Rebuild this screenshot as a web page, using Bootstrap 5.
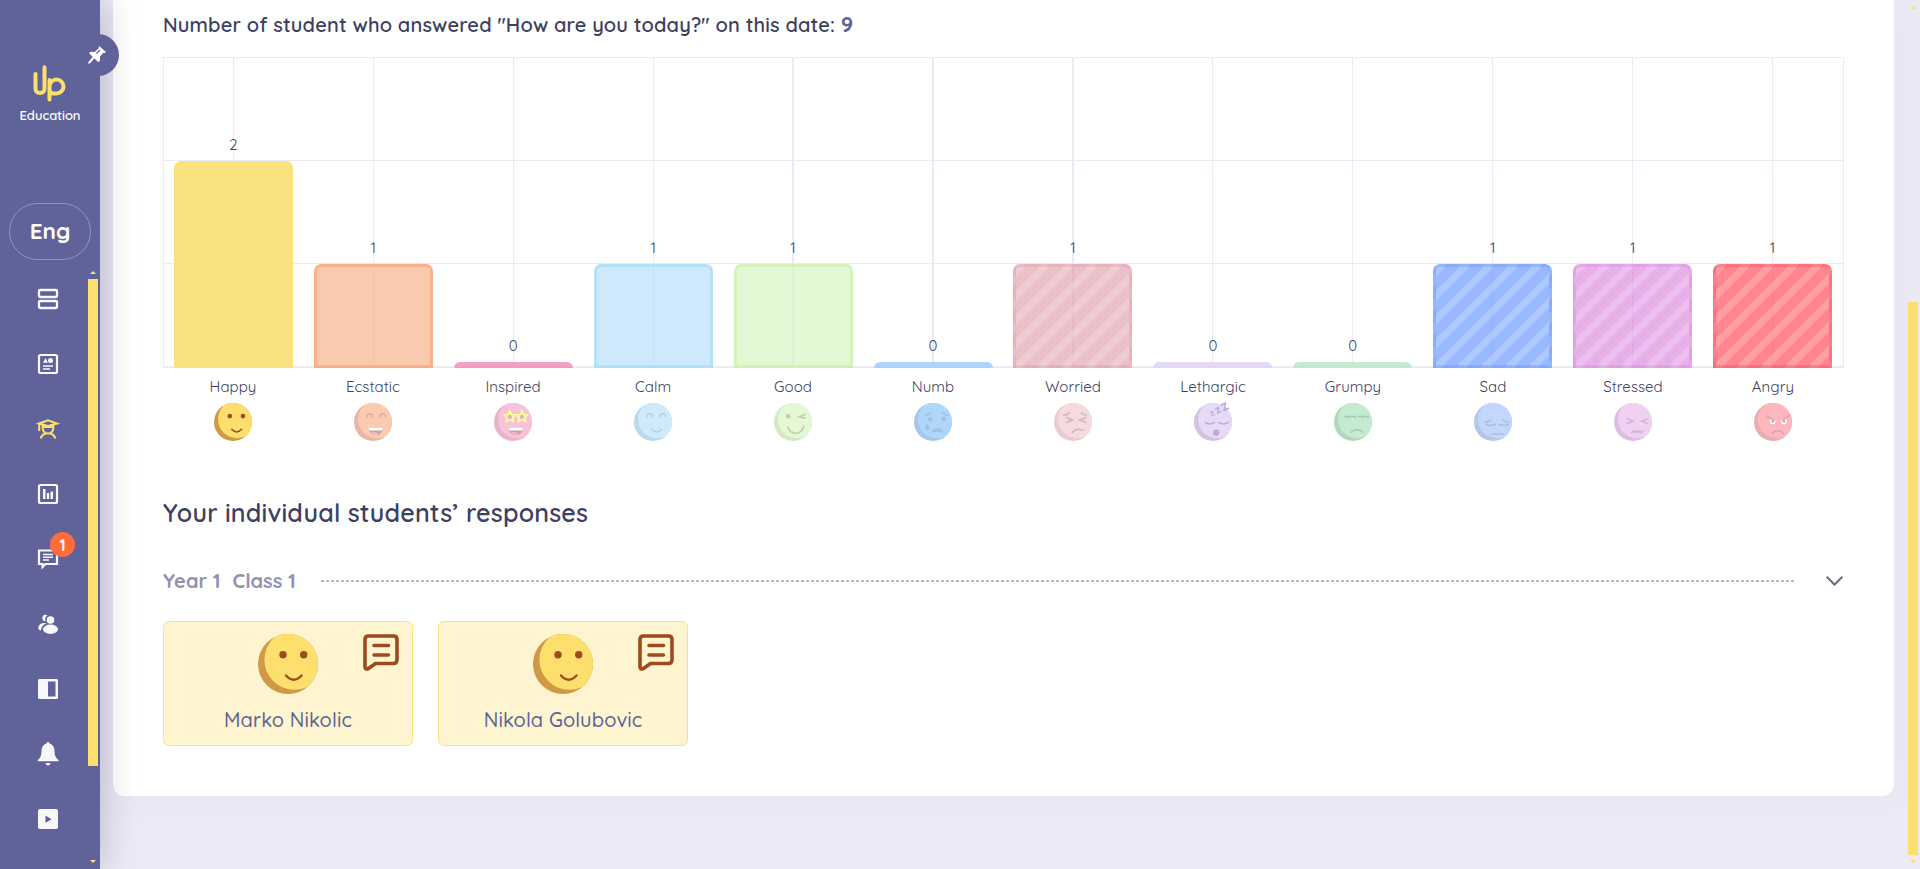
<!DOCTYPE html>
<html lang="en">
<head>
<meta charset="utf-8">
<title>Up Education</title>
<link rel="stylesheet" href="https://cdn.jsdelivr.net/npm/bootstrap@5.3.0/dist/css/bootstrap.min.css">
<style>
body{font-family:Quicksand,Lato,"Open Sans",sans-serif;background:#ebeaf6;color:#3d4161;height:869px;overflow:hidden}
.sidebar{width:100px;height:869px;background:#5f6399;box-shadow:0 0 36px rgba(40,30,60,.27);z-index:5;padding-top:65px}
.pin{width:42px;height:42px;left:77px;top:34px;background:#5f6399;padding-right:2px}
.logo{width:34px;height:37px;margin-right:2px}
.brand{font-size:13px;line-height:16px;font-weight:600;margin-top:5px;letter-spacing:-.1px}
.lang{width:82px;height:57px;border:1px solid #9495b3;margin-top:80px;border-radius:29px!important;font-size:22.5px;font-weight:700;line-height:1}
.menu-list{width:96px;margin-top:6px}
.menu-item{height:65px;color:#f8f8fc}
.menu-item svg{width:20px;height:20px;overflow:visible}
.menu-item.current{color:#fcdf6d}
.bubble{width:25px;height:25px;left:50px;top:6px;background:#ff6b3b;font-size:16px;font-weight:700;z-index:1}
.track{width:10px}
.thumb{width:10px;background:#fcdf6d}
.arrow-up,.arrow-down{width:0;height:0;border-left:3px solid transparent;border-right:3px solid transparent}
.arrow-up{border-bottom:3px solid #fcdf6d}
.arrow-down{border-top:3px solid #fcdf6d}
.track-side{left:88px;top:271px;height:592px}
.track-side .thumb{height:487px;margin-top:5px}
.track-page{left:1908px;top:6px;height:857px}
.track-page .thumb{height:553px;margin-top:293px}
.panel{width:1781px;height:796px;margin-left:13px;padding:9px 50px 0;border-radius:0 0 12px 12px;box-shadow:0 0 40px rgba(95,99,153,.05)}
.total{font-size:20px;line-height:30px;font-weight:600;letter-spacing:.15px}
.total b{font-size:22px;color:#5f6399;letter-spacing:0}
.plot{width:1681px;height:311px;margin-top:17px;background:
 linear-gradient(#ebeaf6,#ebeaf6) 0 0/100% 1px no-repeat,
 linear-gradient(#ebeaf6,#ebeaf6) 0 103px/100% 1px no-repeat,
 linear-gradient(#ebeaf6,#ebeaf6) 0 206px/100% 1px no-repeat,
 linear-gradient(#ebeaf6,#ebeaf6) 0 309px/100% 2px no-repeat,
 linear-gradient(#ebeaf6,#ebeaf6) 0 0/1px 100% no-repeat,
 linear-gradient(#ebeaf6,#ebeaf6) 100% 0/1px 100% no-repeat}
.slot{width:139.93px;background:linear-gradient(#ebeaf6,#ebeaf6) 70px 0/1px 100% no-repeat}
.slot.thick{background-size:2px 100%;background-position-x:69px}
.count{font-size:15px;line-height:20px;margin-bottom:6px;font-weight:450;padding-left:1px}
.bar{width:119px;border-radius:7px 7px 0 0;background-color:rgba(var(--c),.6);border:3px solid rgba(var(--e),.5);margin-left:1px}
.bar.flat{border:0;background-color:rgba(var(--e),.85)}
.bar.solid{background-color:#fae37f;border-color:#fae37f}
.bar.striped{border-color:rgba(var(--e),.38);background-image:repeating-linear-gradient(135deg,rgba(255,255,255,.2) 0 7px,transparent 7px 16.9px)}
.names{width:1680px;margin-top:9px}
.mood{width:140px;font-size:15px;line-height:20px;font-weight:450;letter-spacing:.05px}
.mood svg{width:38px;height:38px;margin-top:6px}
.mood.dim svg{opacity:.5}
.section-title{font-size:25px;line-height:30px;font-weight:600;margin-top:57px;letter-spacing:.2px}
.class-row{height:30px;margin-top:38px;color:#9192b0;font-size:20px;font-weight:700;line-height:30px;padding-right:1px}
.class-name{margin-left:12px}
.dots{height:2px;margin:0 31px 0 25px;background:repeating-linear-gradient(90deg,#bab8cf 0 3px,transparent 3px 5px)}
.students{margin-top:25px;gap:25px}
.student{width:250px;height:125px;background:#fef5d0;border:1px solid #fae37f;border-radius:6px;padding-top:12px;color:#5f6399;font-size:20px;font-weight:500;letter-spacing:.12px}
.student .face{width:60px;height:60px}
.student .note{right:13px;top:12px;width:36px;height:37px}
.who{line-height:30px;margin-top:11px}
</style>
</head>
<body>
<svg width="0" height="0" class="position-absolute"><defs><clipPath id="disc"><circle cx="30" cy="30" r="30"/></clipPath></defs></svg>
<div class="d-flex">
<aside class="sidebar position-relative flex-shrink-0 d-flex flex-column align-items-center text-white">
 <div class="pin position-absolute rounded-circle d-flex align-items-center justify-content-center">
  <svg width="18" height="18" viewBox="0 0 18 18"><path fill="#fff" d="M11 0l7 6-2 1.300-1-.3-3 3.500 0 4-1.700 1.700-4-4L2 17.500H.3V16l4.500-5L1 7l1.600-1.300 4 .2L10.500 2.500z"/><path d="M8.500 7.500L12 4" stroke="#5f6399" stroke-width="1.300"/></svg>
 </div>
 <svg class="logo" viewBox="0 0 34 37" fill="none" stroke="#fcdf6d" stroke-width="4" stroke-linecap="round"><path d="M3.500 9v14.500q0 4.500 4.500 4.500t4.500-4.500V2.200"/><path d="M17.500 15v19.500M17.500 21.500a7 7 0 1 1 7 7h-3q-4 0-4-4"/></svg>
 <div class="brand">Education</div>
 <div class="lang rounded-pill d-flex align-items-center justify-content-center">Eng</div>
 <nav class="menu-list d-flex flex-column align-self-start">
  <a class="menu-item d-flex align-items-center justify-content-center"><svg viewBox="0 0 20 20" fill="none" stroke="currentColor" stroke-width="2.300"><rect x="1" y="1" width="18" height="7" rx="1"/><rect x="1" y="12" width="18" height="7" rx="1"/></svg></a>
  <a class="menu-item d-flex align-items-center justify-content-center"><svg viewBox="0 0 20 20" fill="none" stroke="currentColor"><rect x="1" y="1" width="18" height="18" rx="1.500" stroke-width="2.200"/><path d="M5 8.700L7.500 4 10 8.700z" fill="currentColor" stroke="none"/><circle cx="12.500" cy="6.500" r="2.500" fill="currentColor" stroke="none"/><path d="M5 12h10M5 15h7" stroke-width="1.300"/></svg></a>
  <a class="menu-item current d-flex align-items-center justify-content-center"><svg viewBox="0 0 20 20" fill="none" stroke="currentColor" stroke-width="2"><path d="M1 4.500L10 1.200l9 3.300L10 7zM1.200 4.500V12M4.700 6v3.500a5.300 5 0 0 0 10.600 0V6M5 7.200Q10 8.800 15 7.200M2.500 19.500Q4 15.500 7.500 14.500M17.500 19.500Q16 15.500 12.500 14.500"/></svg></a>
  <a class="menu-item d-flex align-items-center justify-content-center"><svg viewBox="0 0 20 20" fill="none" stroke="currentColor" stroke-width="2.200"><rect x="1" y="1" width="18" height="18" rx="1.500"/><path d="M6.200 5v10M10 9v6M13.800 7.500V15" stroke-width="2.500"/></svg></a>
  <a class="menu-item position-relative d-flex align-items-center justify-content-center"><svg viewBox="0 0 20 20" fill="none" stroke="currentColor" stroke-width="2.200"><path d="M1 1.500h18v13.500H7.500L4.500 18v-3H1z"/><path d="M5 5.500h10M5 8.300h10M5 11h6" stroke-width="1.400"/></svg><span class="bubble position-absolute rounded-circle d-flex align-items-center justify-content-center">1</span></a>
  <a class="menu-item d-flex align-items-center justify-content-center"><svg viewBox="0 0 20 20" fill="currentColor"><ellipse cx="12.500" cy="15.300" rx="7.500" ry="4.700"/><circle cx="12.500" cy="6" r="3.800"/><path d="M9.500 1.300A3.300 3.300 0 1 0 7.500 7.300 5.300 5.300 0 0 1 9.500 1.300zM8.500 9.200Q2 8 .3 13q-.6 2.500 2.700 3.500 0-5 5.500-7.300z"/></svg></a>
  <a class="menu-item d-flex align-items-center justify-content-center"><svg viewBox="0 0 20 20"><rect width="20" height="20" rx="1.500" fill="currentColor"/><path d="M10 2.500h7.500v15H10z" fill="#5f6399"/></svg></a>
  <a class="menu-item d-flex align-items-center justify-content-center"><svg viewBox="0 0 20 20" fill="currentColor"><path d="M10-2a1.500 1.500 0 0 1 1.500 1.500Q16.500 1 16.500 7q0 6.500 4 9v1.300H-.3V16q3.800-2.500 3.800-9 0-6 5-7.500A1.500 1.500 0 0 1 10-2zM7.500 19h5Q12 21.500 10 21.500T7.500 19z"/></svg></a>
  <a class="menu-item d-flex align-items-center justify-content-center"><svg viewBox="0 0 20 20"><rect width="20" height="20" rx="2" fill="currentColor"/><path d="M7.500 6.500v7.500l6-3.700z" fill="#5f6399"/></svg></a>
 </nav>
 <div class="track track-side position-absolute d-flex flex-column align-items-center"><i class="arrow-up"></i><i class="thumb"></i><i class="arrow-down mt-auto"></i></div>
</aside>
<main>
 <section class="panel bg-white">
  <div class="total">Number of student who answered "How are you today?" on this date: <b>9</b></div>
  <div class="plot d-flex" id="plot"></div>
  <div class="names d-flex" id="names"></div>
  <h2 class="section-title mb-0">Your individual students’ responses</h2>
  <div class="class-row d-flex align-items-center"><span>Year 1</span><span class="class-name">Class 1</span><span class="dots flex-grow-1"></span><svg width="17" height="10" viewBox="0 0 17 10" fill="none" stroke="#6b6887" stroke-width="2"><path d="M.7.700l7.800 8 7.800-8"/></svg></div>
  <div class="students d-flex" id="students"></div>
 </section>
</main>
<div class="track track-page position-absolute d-flex flex-column align-items-center"><i class="arrow-up"></i><i class="thumb"></i><i class="arrow-down mt-auto"></i></div>
</div>
<script src="https://cdn.jsdelivr.net/npm/bootstrap@5.3.0/dist/js/bootstrap.bundle.min.js"></script>
<script>
const laugh = '<path d="M22.500 39h23q-1 12-11 12t-12-12z" fill="#8a4a4a" stroke="none"/><path d="M22.500 39h23l-1 4.500H24z" fill="#fff" stroke="none"/><path d="M26 47.500q7-4 13 2-6 3-13-2z" fill="#ff6b7b" stroke="none"/>';
const star = x => `<path transform="translate(${x} 21.500)" d="M0-8.500l2.500 5.300 5.900.7-4.300 4 1.100 5.900L0 4.600l-5.200 2.800 1.100-5.900-4.300-4 5.900-.7z" fill="#a06a90" stroke="#ffff2e" stroke-width="3"/>`;
const smile = '<path d="M28 41.500q7.700 8.500 15.500 0"/>';
// name, count, fill rgb, edge rgb, face, face shade, features colour, features
const moods = [
 ['Happy',2,'250,227,127','250,227,127','#fcdf6d','#cf9947','#9c4b20','<g fill="#9c4b20" stroke="none"><circle cx="25" cy="20.700" r="3.700"/><circle cx="45.700" cy="20.700" r="3.700"/></g>'+smile],
 ['Ecstatic',1,'247,167,120','251,154,105','#f79860','#cc7058','#a85f5f','<path d="M20.500 22q0-5 4.500-5t4.500 5M41 22q0-5 4.500-5t4.500 5"/>'+laugh],
 ['Inspired',0,'244,143,181','242,143,183','#f088b8','#d06c9c','#a05a80',star(25)+star(44)+laugh],
 ['Calm',1,'172,219,249','156,217,248','#9fd8f9','#7ab4dc','#7aa0c8','<path d="M20.500 22q0-5 4.500-5t4.500 5M41 22q0-5 4.500-5t4.500 5"/>'+smile],
 ['Good',1,'207,243,183','194,240,158','#c8f2a8','#aad092','#80a868','<circle cx="22.500" cy="21" r="3.700" fill="#80a868" stroke="none"/><path d="M49 18l-9 4 9 2M22 38q3 10 12 10t13-11" stroke-width="2.800"/>'],
 ['Numb',0,'161,205,250','161,205,250','#62aef8','#4a92d8','#4a86c4','<path d="M17.500 19q6 0 9-4M45 15q3 4 9 4"/><g fill="#4a86c4" stroke="none"><circle cx="25.600" cy="25.600" r="3.700"/><circle cx="47" cy="25.600" r="3.700"/><path d="M21 32q8 11 0 11t0-11zM27 47q0-7 9.500-7T46 47q-9-3-19 0z"/></g>'],
 ['Worried',1,'222,150,165','227,158,171','#ecb8c0','#da98a4','#a8707c','<path d="M15 19q6 0 9-4M43 15q3 4 8 4M20 23l9 4-9 3.500M50 23l-9 4 9 3.500M29 47q5-8 17-4"/>'],
 ['Lethargic',0,'223,212,243','223,212,243','#ccb8f0','#a888c8','#8a58a8','<path d="M17.600 30.500q7.500 5 15 0M39 30.500q7.500 5 15 0"/><circle cx="35" cy="47" r="5" fill="#8a58a8" stroke="none"/><g fill="#8a58a8" stroke="none" font-weight="700" transform="rotate(-28 30 19)"><text x="27" y="20" font-size="14">z</text><text x="36" y="21" font-size="18">z</text><text x="47" y="22" font-size="23">z</text></g>'],
 ['Grumpy',0,'187,232,199','187,232,199','#88d8a0','#68b080','#5a9870','<path d="M23 23h11q-5 6-11 0zM44 23h10q-5 6-10 0z" fill="#fff" stroke-width="1"/><path d="M17.600 21.500H34M39 21.500h16" stroke-width="2.800"/><path d="M27 46q9-8 19 0"/>'],
 ['Sad',1,'85,139,255','106,154,250','#88b0fa','#6890d8','#6080c0','<path d="M18 30q6 0 9-4M45 26q3 4 10 4M18.600 33.500q7 4 15 0M40 33.500q7 4 15 0M28 49h18"/>'],
 ['Stressed',1,'215,124,219','218,140,221','#e4a4e4','#c07ccc','#a86ab0','<path d="M21 25l9 3.700-9 3.700M53 25l-9 3.700 9 3.700"/><path d="M28 47l2.500-3 2.500 3 2.500-3 2.500 3 2.500-3 2.500 3 2.500-3" stroke-width="2.500"/>'],
 ['Angry',1,'255,54,67','254,80,96','#ff6f7c','#d06070','#a05068','<circle cx="29.500" cy="29" r="3.300" fill="#804060" stroke="#fff"/><circle cx="47.500" cy="29" r="3.300" fill="#804060" stroke="#fff"/><path d="M21 21l11 6M56 20l-11 7M29 48q9-9 18 0"/>']
];
const face = (m, cls='') => `<svg class="${cls}" viewBox="0 0 60 60" overflow="visible"><g clip-path="url(#disc)"><rect width="60" height="60" fill="${m[5]}"/><circle cx="36.400" cy="25.700" r="30" fill="${m[4]}"/></g><g fill="none" stroke="${m[6]}" stroke-width="2.400" stroke-linecap="round">${m[7]}</g></svg>`;
const striped = ['Worried','Sad','Stressed','Angry'], thick = ['Good','Numb','Worried'];
plot.innerHTML = moods.map(m => `<div class="slot d-flex flex-column justify-content-end align-items-center ${thick.includes(m[0])?'thick':''}"><div class="count">${m[1]}</div><div class="bar ${m[1]?'':'flat'} ${m[0]=='Happy'?'solid':''} ${striped.includes(m[0])?'striped':''}" style="height:${m[1]?m[1]*103+1:6}px;--c:${m[2]};--e:${m[3]}"></div></div>`).join('');
names.innerHTML = moods.map((m,i) => `<div class="mood d-flex flex-column align-items-center ${i?'dim':''}">${m[0]}${face(m)}</div>`).join('');
students.innerHTML = ['Marko Nikolic','Nikola Golubovic'].map(n => `<div class="student position-relative text-center">${face(moods[0],'face')}<svg class="note position-absolute" viewBox="0 0 36 37" fill="none" stroke="#9c4b20" stroke-width="3.600" stroke-linecap="round" stroke-linejoin="round"><path d="M2 31V5.500Q2 2 5.500 2h25Q34 2 34 5.500v20q0 4-3.500 4H12.500L5.500 34.500Q2 36 2 33z"/><path d="M11 11.500h14.500M11 21h14.500"/></svg><div class="who">${n}</div></div>`).join('');
</script>
</body>
</html>
